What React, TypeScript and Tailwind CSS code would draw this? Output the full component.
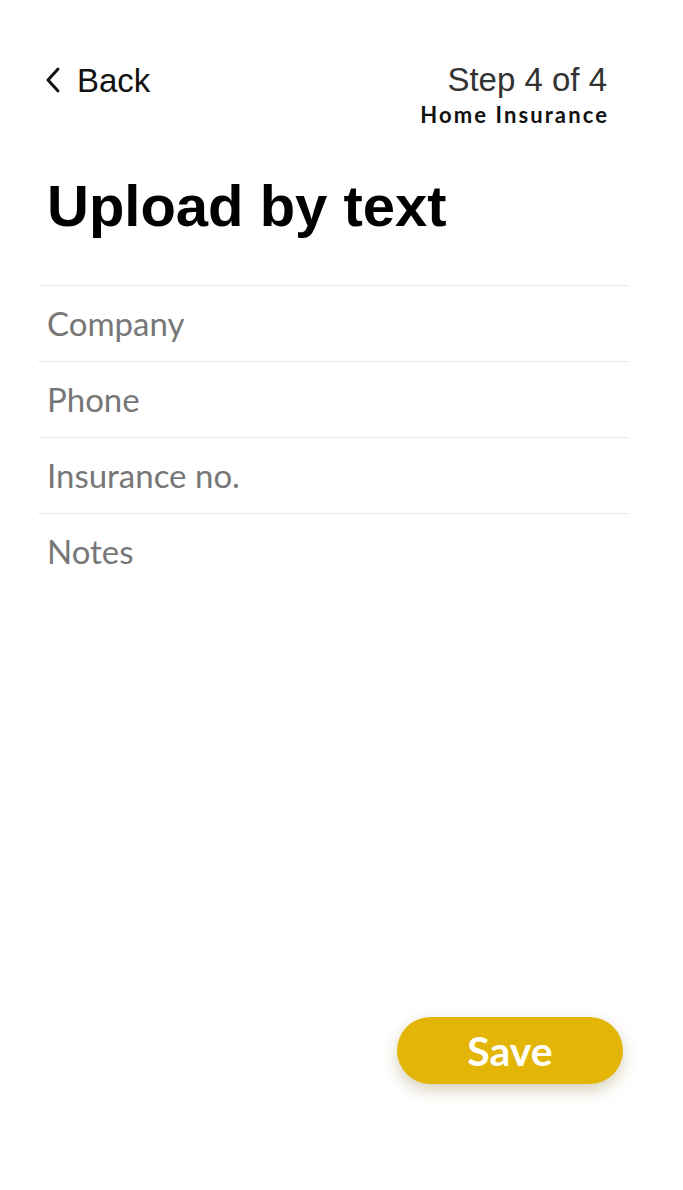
const fields = ['Company', 'Phone', 'Insurance no.', 'Notes']

const App = () => {
  return (
    <div className="w-[683px] h-[1190px] bg-white flex flex-col" style={{ fontFamily: '"Liberation Sans", Arial, sans-serif' }}>
      <div className="flex justify-between pt-[58px] pl-[44px] pr-[76px]">
        <div className="flex items-center gap-[15px] h-[44px]">
          <svg width="18" height="28" viewBox="0 0 18 28" fill="none">
            <path d="M14 3 L4 14 L14 25" stroke="#111" strokeWidth="3" strokeLinecap="round" strokeLinejoin="round" />
          </svg>
          <span className="text-[33px] leading-none text-[#111]">Back</span>
        </div>
        <div className="flex flex-col items-end">
          <span className="text-[33px] leading-[44px] text-[#333] font-light">Step 4 of 4</span>
          <span className="text-[22px] leading-[26px] font-bold text-[#111] tracking-[2.1px] mr-[-2px]" style={{ fontFamily: 'Lato, sans-serif' }}>Home Insurance</span>
        </div>
      </div>

      <h1 className="text-[58px] leading-none font-bold text-black pl-[47px] mt-[49px]">Upload by text</h1>

      <div className="mt-[50px] mx-[38px] w-[591px] border-t border-[#ebebeb]" style={{ fontFamily: 'Lato, sans-serif' }}>
        {fields.map((f, i) => (
          <div
            key={f}
            className={`h-[76px] flex items-center pl-[9px] text-[33px] text-[#777] ${i < fields.length - 1 ? 'border-b border-[#ebebeb]' : ''}`}
          >
            {f}
          </div>
        ))}
      </div>

      <div className="flex-1" />

      <div className="flex justify-end pr-[60px] pb-[106px]">
        <button
          className="w-[226px] h-[67px] rounded-full bg-[#e3b507] text-white text-[41px] font-bold shadow-[0_6px_16px_rgba(120,100,20,0.3)]"
          style={{ fontFamily: 'Lato, sans-serif' }}
        >
          Save
        </button>
      </div>
    </div>
  )
}

export default App
